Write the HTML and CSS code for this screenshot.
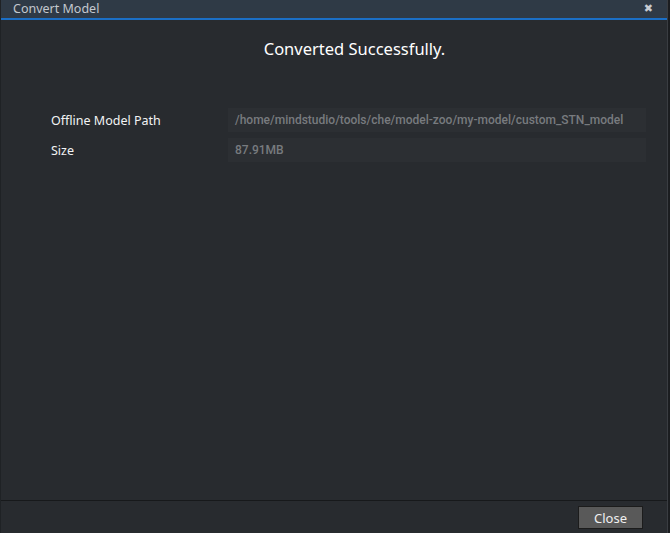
FILE: index.html
```html
<!DOCTYPE html>
<html>
<head>
<meta charset="utf-8">
<link rel="stylesheet" href="styles.css">
</head>
<body>
<div class="frame">
  <div class="dialog">
    <div class="titlebar">
      <span class="title">Convert Model</span>
      <span class="close-x">&#x2716;</span>
    </div>
    <div class="content">
      <h1 class="heading">Converted Successfully.</h1>
      <div class="rows">
        <div class="row">
          <div class="label">Offline Model Path</div>
          <div class="field">/home/mindstudio/tools/che/model-zoo/my-model/custom_STN_model</div>
        </div>
        <div class="row">
          <div class="label">Size</div>
          <div class="field">87.91MB</div>
        </div>
      </div>
    </div>
    <div class="footer">
      <button class="btn">Close</button>
    </div>
  </div>
  <div class="edge"></div>
</div>
</body>
</html>
```
FILE: styles.css
```css
html, body {
  margin: 0;
  padding: 0;
  background: #1e2023;
  overflow: hidden;
}
.frame {
  display: flex;
  width: 670px;
  height: 533px;
}
.dialog {
  width: 667px;
  display: flex;
  flex-direction: column;
  background: #282b2f;
  border-left: 1px solid #1f2225;
  box-sizing: border-box;
}
.edge {
  flex: 1;
  background: #1b1d20;
  border-left: 1px solid #3a3d42;
}
.titlebar {
  height: 18px;
  background: #2f3a46;
  border-bottom: 2px solid #1b6fc6;
  display: flex;
  align-items: center;
  justify-content: space-between;
  padding: 0 14px 0 12px;
  font-family: "Noto Sans", "Open Sans", sans-serif;
}
.title {
  color: #c3c8ce;
  font-size: 12.5px;
  line-height: 18px;
}
.close-x {
  color: #c8ccd1;
  font-size: 11px;
  line-height: 18px;
  font-family: "DejaVu Sans", sans-serif;
}
.content {
  flex: 1;
  padding-top: 17px;
}
.heading {
  margin: 0;
  text-align: center;
  color: #ffffff;
  font-family: "Noto Sans", "Open Sans", sans-serif;
  font-weight: normal;
  font-size: 16.5px;
  line-height: 24px;
  padding-left: 41px;
}
.rows {
  margin-top: 47px;
  display: flex;
  flex-direction: column;
  gap: 6px;
  padding-left: 50px;
}
.row {
  display: flex;
  align-items: center;
  height: 24px;
}
.label {
  width: 177px;
  color: #f2f3f4;
  font-family: "Noto Sans", "Open Sans", sans-serif;
  font-size: 12.5px;
}
.field {
  width: 418px;
  height: 24px;
  line-height: 24px;
  box-sizing: border-box;
  padding-left: 7px;
  background: #2c2f33;
  color: #787b7f;
  font-family: Roboto, "Liberation Sans", sans-serif;
  font-size: 12px;
  font-weight: 500;
  white-space: nowrap;
  overflow: hidden;
}
.footer {
  height: 32px;
  border-top: 1px solid #17191b;
  display: flex;
  justify-content: flex-end;
  align-items: flex-start;
  padding-right: 24px;
}
.btn {
  margin-top: 5px;
  width: 65px;
  height: 23px;
  background: #595959;
  border: 1px solid #1c1c1c;
  color: #f0f0f0;
  font-family: "Noto Sans", "Open Sans", sans-serif;
  font-size: 13px;
  padding: 0;
  line-height: 20px;
}
```
